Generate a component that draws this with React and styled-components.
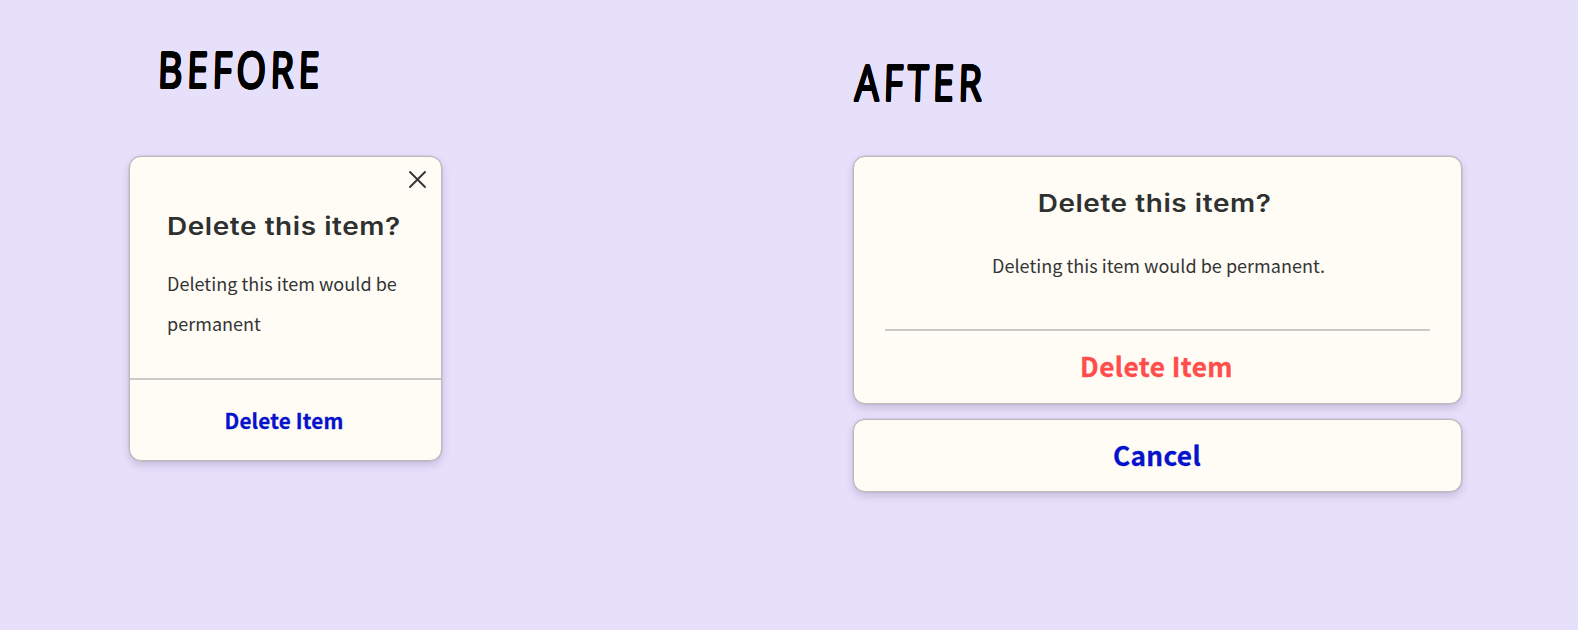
import React from "react";
import styled, { createGlobalStyle } from "styled-components";

const sans = `"Noto Sans CJK SC", "Noto Sans", sans-serif`;

const GlobalStyle = createGlobalStyle`
  * { box-sizing: border-box; }
  body { margin: 0; background: #e7e0fb; }
  h1, h2, p { margin: 0; }
  button { font: inherit; border: 0; background: none; padding: 0; cursor: pointer; }
`;

const Page = styled.main`
  display: flex;
  align-items: flex-start;
  gap: 411px;
  width: 1578px;
  height: 630px;
  padding-left: 129px;
  background: #e7e0fb;
  overflow: hidden;
`;

const Column = styled.section`
  display: flex;
  flex-direction: column;
  width: ${(p) => p.$width}px;
`;

/* The ring of shadows thickens the strokes and rounds their ends, like a marker. */
const Heading = styled.h1`
  height: 155.5px;
  padding: ${(p) => p.$top}px 0 0 ${(p) => p.$left}px;
  font: 400 50px/60px "Noto Sans", sans-serif;
  letter-spacing: 5.2px;
  color: #000;
  white-space: nowrap;
  text-shadow:
    0.9px 0 #000, -0.9px 0 #000, 0 0.9px #000, 0 -0.9px #000,
    0.6px 0.6px #000, -0.6px 0.6px #000, 0.6px -0.6px #000, -0.6px -0.6px #000;

  span {
    display: inline-block;
    transform: scaleX(0.77) skewX(-2deg);
    transform-origin: 0 100%;
  }
`;

const Card = styled.div`
  display: flex;
  flex-direction: column;
  height: ${(p) => p.$height}px;
  border: 1px solid #bbbbbd;
  border-radius: 12px;
  background: #fffcf5;
  box-shadow: 0 0 0 0.5px rgba(150, 150, 150, 0.4), 0 4px 8px rgba(60, 48, 90, 0.2);
`;

const Stack = styled.div`
  display: flex;
  flex-direction: column;
  gap: 15.5px;
`;

const CloseButton = styled.button`
  align-self: flex-end;
  width: 17px;
  height: 17px;
  margin: 14.5px 15px 0 0;

  svg { display: block; overflow: visible; }
`;

const Title = styled.h2`
  font: 600 24.5px/32px Inter, sans-serif;
  letter-spacing: 0.5px;
  color: #2f3131;
  white-space: nowrap;

  span {
    display: inline-block;
    transform: scaleX(1.14);
    transform-origin: ${(p) => (p.$centered ? "50%" : "0")} 50%;
  }
`;

const Message = styled.p`
  font: 400 18px/40.5px ${sans};
  letter-spacing: 0.03px;
  color: #333535;
`;

const CompactBody = styled.div`
  flex: 1;
  padding: 21.5px 30px 0 37px;

  ${Message} { margin-top: 21px; }
`;

const WideBody = styled.div`
  display: flex;
  flex-direction: column;
  align-items: center;
  height: 174px;
  margin: 0 31px;
  padding: 30.5px 0 0;
  border-bottom: 2px solid #c8cac8;

  ${Title} { margin-right: 5px; }
  ${Message} { margin: 26px 0 0 2px; }
`;

const Action = styled.button`
  display: flex;
  flex: ${(p) => (p.$height ? "none" : 1)};
  height: ${(p) => (p.$height ? p.$height + "px" : "auto")};
  align-items: center;
  justify-content: center;
  border-top: ${(p) => (p.$divided ? "2px solid #c8caca" : "0")};
  color: ${(p) => p.$color};
  -webkit-text-stroke: 0.3px ${(p) => p.$color};

  && {
    padding: ${(p) => p.$inset || "0"};
    font: 700 ${(p) => p.$size}px/1.5 ${sans};
    letter-spacing: ${(p) => p.$tracking}px;
  }
`;

export default function App() {
  return (
    <>
      <GlobalStyle />
      <Page>
        <Column $width={313}>
          <Heading $top={39} $left={27.5}><span>BEFORE</span></Heading>
          <Card $height={305}>
            <CloseButton aria-label="Close">
              <svg width="17" height="17" viewBox="0 0 17 17" fill="none" stroke="#333535" strokeWidth="1.9" strokeLinecap="round">
                <path d="M1 1 16 16M16 1 1 16" />
              </svg>
            </CloseButton>
            <CompactBody>
              <Title><span>Delete this item?</span></Title>
              <Message>Deleting this item would be permanent</Message>
            </CompactBody>
            <Action $height={81.5} $divided $size={20.6} $tracking={0.2} $inset="2px 3px 0 0" $color="#0712cc">Delete Item</Action>
          </Card>
        </Column>
        <Column $width={609}>
          <Heading $top={52} $left={1}><span>AFTER</span></Heading>
          <Stack>
            <Card $height={248}>
              <WideBody>
                <Title $centered><span>Delete this item?</span></Title>
                <Message>Deleting this item would be permanent.</Message>
              </WideBody>
              <Action $size={26.2} $tracking={0.4} $inset="0 2px 0 0" $color="#ff4d4b">Delete Item</Action>
            </Card>
            <Card $height={73}>
              <Action $size={26.2} $tracking={0.35} $inset="0 1px 0 0" $color="#0712cc">Cancel</Action>
            </Card>
          </Stack>
        </Column>
      </Page>
    </>
  );
}
